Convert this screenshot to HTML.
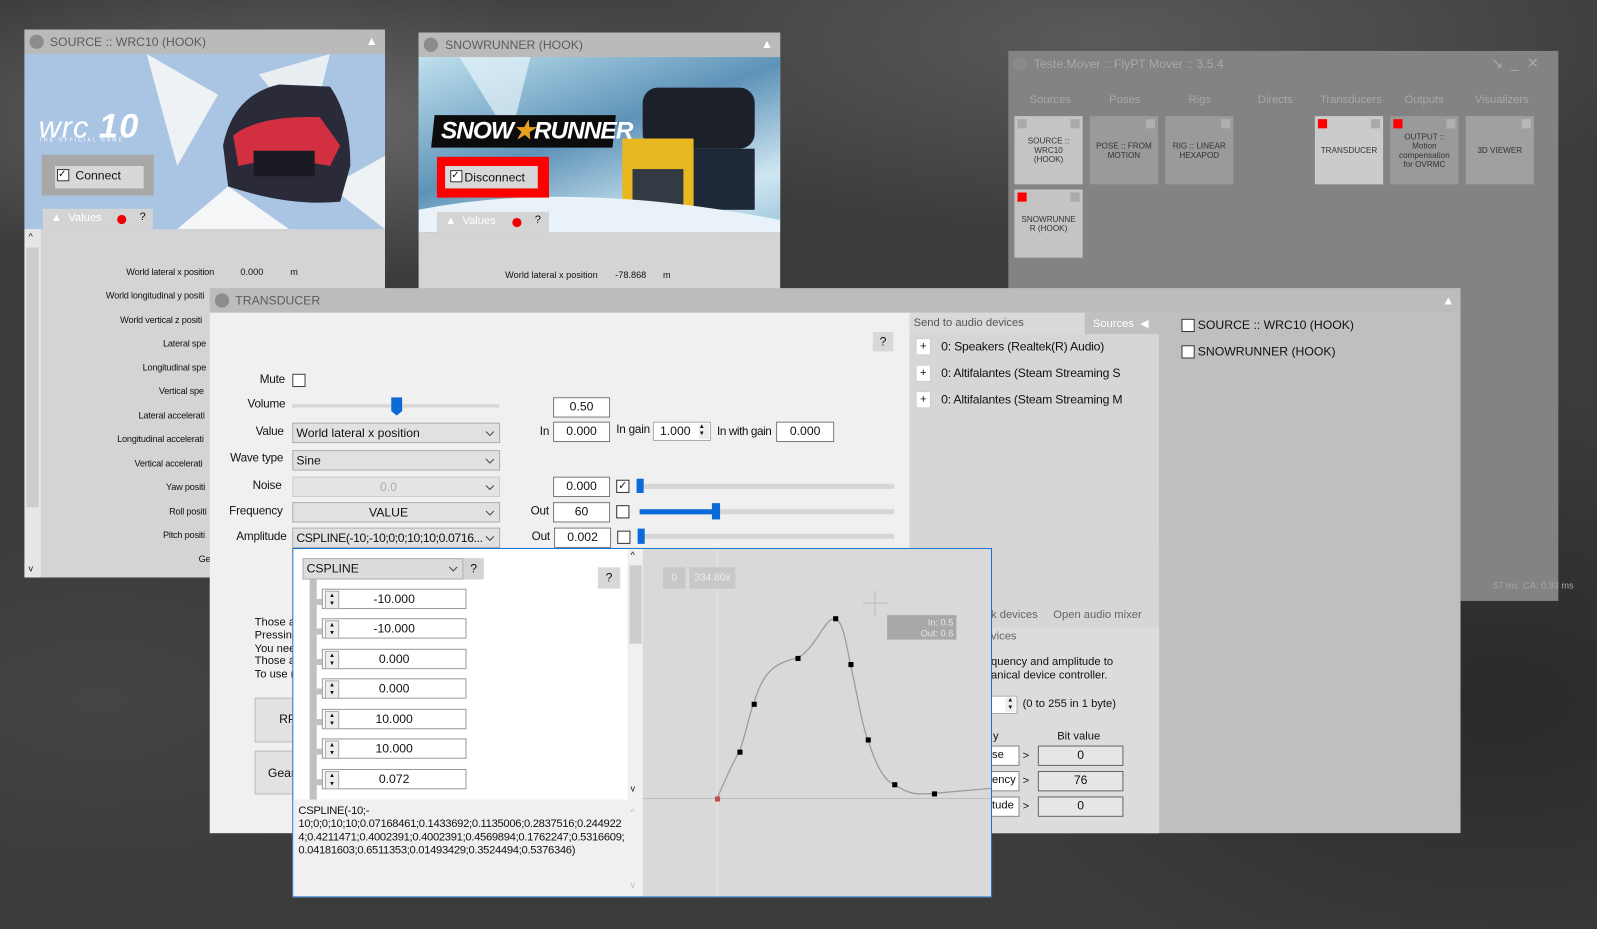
<!DOCTYPE html>
<html><head><meta charset="utf-8"><style>
*{margin:0;padding:0;box-sizing:border-box}
body{width:1597px;height:929px;overflow:hidden;position:relative;font-family:"Liberation Sans",sans-serif;font-size:11px;color:#111;
background:radial-gradient(ellipse 500px 160px at 300px 120px,#6a6a6a,transparent),radial-gradient(ellipse 600px 200px at 1100px 40px,#5a5a5a,transparent),radial-gradient(ellipse 400px 200px at 100px 700px,#444,transparent),radial-gradient(ellipse 500px 300px at 1500px 700px,#2a2a2a,transparent),#3b3b3b}
#w{position:absolute;left:0;top:0;width:1568px;height:912px;transform:scale(1.0185);transform-origin:0 0}
.a{position:absolute}
.t{position:absolute;white-space:nowrap}
.tb{position:absolute;font-size:12px;color:#5c5c5c}
.ic{position:absolute;width:14px;height:14px;border-radius:50%;background:#8c8c8c}
.box{position:absolute;background:#fff;border:1px solid #7a7a7a;text-align:center;font-size:12px;line-height:17px}
.cb{position:absolute;width:13px;height:13px;background:#fff;border:1px solid #333}
.combo{position:absolute;height:20px;background:#e1e1e1;border:1px solid #adadad;font-size:12px;line-height:18px;padding-left:3px;padding-right:18px;overflow:hidden;white-space:nowrap}
.combo:after{content:"";position:absolute;right:6px;top:5px;width:5px;height:5px;border-right:1px solid #444;border-bottom:1px solid #444;transform:rotate(45deg)}
.lbl{position:absolute;font-size:11.5px;text-align:right;white-space:nowrap;letter-spacing:-0.2px}
.card{position:absolute;width:67px;height:67px;font-size:8px;text-align:center;color:#333;display:flex;align-items:center;justify-content:center;line-height:9px}
.sq{position:absolute;width:9px;height:9px;top:3px}
.sp{position:absolute;left:316px;width:142px;height:20px;background:#fff;border:1px solid #999;font-size:12px;line-height:18px;text-align:center}
.sp:before{content:"▲\A▼";white-space:pre;position:absolute;left:2px;top:1px;width:12px;font-size:6px;line-height:8px;background:#eee;border:1px solid #aaa}
.br{position:absolute;left:311px;width:12px;height:6px;background:#c0c0c0}
</style></head><body><div id="w">

<!-- FlyPT Mover window -->
<div class="a" style="left:990px;top:50px;width:540px;height:540px;background:#838383"></div>
<div class="ic" style="left:995px;top:56px;background:#8a8a8a"></div>
<div class="t" style="left:1015px;top:56px;font-size:12px;color:#a9a9a9">Teste.Mover :: FlyPT Mover :: 3.5.4</div>
<div class="t" style="left:1464px;top:54px;font-size:14px;color:#aaa">↘ &nbsp;_ &nbsp;✕</div>
<div class="t" style="left:1011px;top:92px;font-size:11px;color:#a8a8a8">Sources</div>
<div class="t" style="left:1089px;top:92px;font-size:11px;color:#a8a8a8">Poses</div>
<div class="t" style="left:1167px;top:92px;font-size:11px;color:#a8a8a8">Rigs</div>
<div class="t" style="left:1235px;top:92px;font-size:11px;color:#a8a8a8">Directs</div>
<div class="t" style="left:1296px;top:92px;font-size:11px;color:#a8a8a8">Transducers</div>
<div class="t" style="left:1379px;top:92px;font-size:11px;color:#a8a8a8">Outputs</div>
<div class="t" style="left:1448px;top:92px;font-size:11px;color:#a8a8a8">Visualizers</div>
<div class="card" style="left:996px;top:114px;background:#c4c4c4"><div class="sq" style="left:3px;background:#aaa"></div><div class="sq" style="right:3px;background:#aaa"></div>SOURCE ::<br>WRC10<br>(HOOK)</div>
<div class="card" style="left:1070px;top:114px;background:#9a9a9a"><div class="sq" style="right:3px;background:#b0b0b0"></div>POSE :: FROM<br>MOTION</div>
<div class="card" style="left:1144px;top:114px;background:#9a9a9a"><div class="sq" style="right:3px;background:#b0b0b0"></div>RIG :: LINEAR<br>HEXAPOD</div>
<div class="card" style="left:1291px;top:114px;background:#cbcbcb"><div class="sq" style="left:3px;background:#f00"></div><div class="sq" style="right:3px;background:#aaa"></div>TRANSDUCER</div>
<div class="card" style="left:1365px;top:114px;background:#9a9a9a"><div class="sq" style="left:3px;background:#f00"></div><div class="sq" style="right:3px;background:#b0b0b0"></div>OUTPUT ::<br>Motion<br>compensation<br>for OVRMC</div>
<div class="card" style="left:1439px;top:114px;background:#a0a0a0"><div class="sq" style="right:3px;background:#b8b8b8"></div>3D VIEWER</div>
<div class="card" style="left:996px;top:186px;background:#c4c4c4"><div class="sq" style="left:3px;background:#f00"></div><div class="sq" style="right:3px;background:#aaa"></div>SNOWRUNNE<br>R (HOOK)</div>
<div class="t" style="left:1466px;top:570px;font-size:9px;color:#a8a8a8">57 ms &nbsp;CA: 0.93 ms</div>

<!-- WRC window -->
<div class="a" style="left:24px;top:29px;width:354px;height:538px;background:#d4d4d4"></div>
<div class="a" style="left:24px;top:29px;width:354px;height:24px;background:#bababa"></div>
<div class="ic" style="left:29px;top:34px"></div>
<div class="tb" style="left:49px;top:34px">SOURCE :: WRC10 (HOOK)</div>
<div class="t" style="left:359px;top:33px;color:#fff;font-size:12px">▲</div>
<div class="a" style="left:24px;top:53px;width:354px;height:172px;background:#a9c5e3;overflow:hidden">
 <svg width="354" height="172" style="position:absolute;left:0;top:0">
  <polygon points="120,0 190,40 150,110" fill="#eef2f4"/>
  <polygon points="230,20 300,0 280,80" fill="#e8eef2"/>
  <polygon points="200,130 260,172 150,172" fill="#f4f6f8"/>
  <polygon points="300,130 354,100 354,172" fill="#eef2f4"/>
  <path d="M195,90 Q205,40 250,30 L300,32 Q320,60 320,110 L310,145 Q260,150 200,130 Z" fill="#2a2a38"/>
  <path d="M205,80 Q230,60 290,62 L310,90 L300,110 Q250,100 210,110Z" fill="#d23040"/>
  <rect x="225" y="95" width="60" height="25" fill="#1a1a22"/>
 </svg>
 <div class="t" style="left:14px;top:52px;font-size:30px;font-style:italic;color:#fff;letter-spacing:1px">wrc <b style="font-size:34px">10</b></div>
 <div class="t" style="left:14px;top:82px;font-size:5px;color:#fff;letter-spacing:2px">THE OFFICIAL GAME</div>
</div>
<div class="a" style="left:41px;top:152px;width:110px;height:40px;background:#a8a8a8"></div>
<div class="a" style="left:54px;top:163px;width:87px;height:22px;background:#d8d8d8"></div>
<div class="cb" style="left:56px;top:166px;width:12px;height:12px;font-size:10px;line-height:10px">✓</div>
<div class="t" style="left:74px;top:165px;font-size:12px">Connect</div>
<div class="a" style="left:42px;top:205px;width:108px;height:20px;background:#d4d4d4"></div>
<div class="t" style="left:50px;top:208px;color:#fff;font-size:11px">▲ &nbsp;Values</div>
<div class="a" style="left:115px;top:211px;width:9px;height:9px;border-radius:50%;background:#e00"></div>
<div class="t" style="left:137px;top:207px;font-size:11px">?</div>
<div class="a" style="left:24px;top:225px;width:16px;height:342px;background:#e6e6e6"></div>
<div class="a" style="left:26px;top:243px;width:12px;height:255px;background:#cdcdcd"></div>
<div class="t" style="left:28px;top:227px;font-size:9px">^</div>
<div class="t" style="left:28px;top:553px;font-size:9px">v</div>
<div class="lbl" style="left:124px;top:262px;font-size:9px">World lateral x position</div>
<div class="t" style="left:236px;top:262px;font-size:9px">0.000</div>
<div class="t" style="left:285px;top:262px;font-size:9px">m</div>
<div class="lbl" style="left:104px;top:285px;font-size:9px">World longitudinal y positi</div>
<div class="lbl" style="left:118px;top:309px;font-size:9px">World vertical z positi</div>
<div class="lbl" style="left:160px;top:332px;font-size:9px">Lateral spe</div>
<div class="lbl" style="left:140px;top:356px;font-size:9px">Longitudinal spe</div>
<div class="lbl" style="left:156px;top:379px;font-size:9px">Vertical spe</div>
<div class="lbl" style="left:136px;top:403px;font-size:9px">Lateral accelerati</div>
<div class="lbl" style="left:115px;top:426px;font-size:9px">Longitudinal accelerati</div>
<div class="lbl" style="left:132px;top:450px;font-size:9px">Vertical accelerati</div>
<div class="lbl" style="left:163px;top:473px;font-size:9px">Yaw positi</div>
<div class="lbl" style="left:166px;top:497px;font-size:9px">Roll positi</div>
<div class="lbl" style="left:160px;top:520px;font-size:9px">Pitch positi</div>
<div class="lbl" style="left:195px;top:544px;font-size:9px">Ge</div>

<!-- Snowrunner window -->
<div class="a" style="left:411px;top:32px;width:355px;height:260px;background:#d4d4d4"></div>
<div class="a" style="left:411px;top:32px;width:355px;height:24px;background:#bababa"></div>
<div class="ic" style="left:416px;top:37px"></div>
<div class="tb" style="left:437px;top:37px">SNOWRUNNER (HOOK)</div>
<div class="t" style="left:747px;top:36px;color:#fff;font-size:12px">▲</div>
<div class="a" style="left:411px;top:56px;width:355px;height:172px;background:linear-gradient(160deg,#bfe0ee,#5e93b8 45%,#cfe6f2 80%,#9cc4dc);overflow:hidden">
 <svg width="355" height="172" style="position:absolute;left:0;top:0">
  <polygon points="40,0 110,0 90,80" fill="#e6f4fa" opacity=".7"/>
  <rect x="220" y="30" width="110" height="60" rx="15" fill="#1c2028"/>
  <rect x="200" y="80" width="70" height="70" fill="#e9b820"/>
  <rect x="210" y="110" width="50" height="40" fill="#333a44"/>
  <rect x="270" y="90" width="60" height="60" fill="#1e2836"/>
  <path d="M0,150 Q150,120 355,160 L355,172 L0,172Z" fill="#e8f2f8"/>
 </svg>
 <div class="t" style="left:14px;top:57px;width:178px;height:32px;background:#0c0c0c;transform:skewX(-6deg)"></div>
 <div class="t" style="left:22px;top:58px;font-size:24px;font-weight:bold;font-style:italic;color:#fff;letter-spacing:-1px">SNOW<span style="color:#e8a020">★</span>RUNNER</div>
</div>
<div class="a" style="left:429px;top:154px;width:110px;height:40px;background:#f00"></div>
<div class="a" style="left:437px;top:163px;width:91px;height:22px;background:#d8d8d8"></div>
<div class="cb" style="left:442px;top:167px;width:12px;height:12px;font-size:10px;line-height:10px">✓</div>
<div class="t" style="left:456px;top:167px;font-size:12px">Disconnect</div>
<div class="a" style="left:429px;top:208px;width:110px;height:20px;background:#d4d4d4"></div>
<div class="t" style="left:437px;top:211px;color:#fff;font-size:11px">▲ &nbsp;Values</div>
<div class="a" style="left:503px;top:214px;width:9px;height:9px;border-radius:50%;background:#e00"></div>
<div class="t" style="left:525px;top:210px;font-size:11px">?</div>
<div class="t" style="left:496px;top:265px;font-size:9px">World lateral x position</div>
<div class="t" style="left:604px;top:265px;font-size:9px">-78.868</div>
<div class="t" style="left:651px;top:265px;font-size:9px">m</div>

<!-- Transducer window -->
<div class="a" style="left:206px;top:283px;width:1228px;height:535px;background:#bfbfbf"></div>
<div class="a" style="left:206px;top:283px;width:1228px;height:24px;background:#bcbcbc"></div>
<div class="ic" style="left:211px;top:288px"></div>
<div class="tb" style="left:231px;top:288px">TRANSDUCER</div>
<div class="t" style="left:1416px;top:288px;color:#fff;font-size:12px">▲</div>
<div class="a" style="left:206px;top:307px;width:687px;height:511px;background:#f0f0f0"></div>
<div class="a" style="left:893px;top:307px;width:245px;height:511px;background:#d6d6d6"></div>
<div class="a" style="left:893px;top:307px;width:172px;height:21px;background:#dadada"></div>
<div class="t" style="left:897px;top:311px;font-size:11px;color:#555">Send to audio devices</div>
<div class="a" style="left:1065px;top:307px;width:73px;height:21px;background:#c0c0c0"></div>
<div class="t" style="left:1073px;top:311px;font-size:11px;color:#fff">Sources &nbsp;◀</div>
<div class="a" style="left:899px;top:332px;width:15px;height:17px;background:#fff;border:1px solid #ccc;font-size:11px;text-align:center;line-height:15px">+</div>
<div class="t" style="left:924px;top:333px;font-size:12px;letter-spacing:-0.2px">0: Speakers (Realtek(R) Audio)</div>
<div class="a" style="left:899px;top:358px;width:15px;height:17px;background:#fff;border:1px solid #ccc;font-size:11px;text-align:center;line-height:15px">+</div>
<div class="t" style="left:924px;top:359px;font-size:12px;letter-spacing:-0.2px">0: Altifalantes (Steam Streaming S</div>
<div class="a" style="left:899px;top:384px;width:15px;height:17px;background:#fff;border:1px solid #ccc;font-size:11px;text-align:center;line-height:15px">+</div>
<div class="t" style="left:924px;top:385px;font-size:12px;letter-spacing:-0.2px">0: Altifalantes (Steam Streaming M</div>
<div class="cb" style="left:1160px;top:313px"></div>
<div class="t" style="left:1176px;top:312px;font-size:12px">SOURCE :: WRC10 (HOOK)</div>
<div class="cb" style="left:1160px;top:339px"></div>
<div class="t" style="left:1176px;top:338px;font-size:12px">SNOWRUNNER (HOOK)</div>

<div class="a" style="left:857px;top:326px;width:20px;height:19px;background:#d8d8d8;text-align:center;font-size:12px;line-height:19px">?</div>
<div class="lbl" style="left:255px;top:367px">Mute</div>
<div class="cb" style="left:287px;top:367px;border-color:#444"></div>
<div class="lbl" style="left:243px;top:391px">Volume</div>
<div class="a" style="left:287px;top:397px;width:203px;height:3px;background:#e0e0e0;border:1px solid #d0d0d0"></div>
<div class="a" style="left:384px;top:390px;width:11px;height:18px;background:#0a6ad8;clip-path:polygon(0 0,100% 0,100% 75%,50% 100%,0 75%)"></div>
<div class="box" style="left:543px;top:390px;width:56px;height:20px">0.50</div>
<div class="lbl" style="left:251px;top:418px">Value</div>
<div class="combo" style="left:287px;top:415px;width:204px">World lateral x position</div>
<div class="lbl" style="left:530px;top:418px">In</div>
<div class="box" style="left:543px;top:414px;width:56px;height:20px">0.000</div>
<div class="lbl" style="left:605px;top:416px">In gain</div>
<div class="box" style="left:641px;top:414px;width:57px;height:19px;text-align:left;padding-left:6px;border-color:#aaa">1.000<span style="position:absolute;right:1px;top:1px;width:10px;height:15px;font-size:6px;line-height:7px;background:#eee">▲<br>▼</span></div>
<div class="lbl" style="left:704px;top:418px;letter-spacing:-0.4px">In with gain</div>
<div class="box" style="left:762px;top:414px;width:57px;height:20px">0.000</div>
<div class="lbl" style="left:226px;top:444px">Wave type</div>
<div class="combo" style="left:287px;top:442px;width:204px">Sine</div>
<div class="lbl" style="left:248px;top:471px">Noise</div>
<div class="combo" style="left:287px;top:468px;width:204px;color:#aaa;text-align:center;background:#e4e4e4;border-color:#ccc">0.0</div>
<div class="box" style="left:543px;top:468px;width:56px;height:20px">0.000</div>
<div class="cb" style="left:605px;top:471px;font-size:11px;line-height:10px;text-align:center">✓</div>
<div class="a" style="left:625px;top:475px;width:253px;height:5px;background:#d6d6d6"></div>
<div class="a" style="left:625px;top:470px;width:7px;height:14px;background:#0a6ad8"></div>
<div class="lbl" style="left:225px;top:496px">Frequency</div>
<div class="combo" style="left:287px;top:493px;width:204px;text-align:center">VALUE</div>
<div class="lbl" style="left:521px;top:496px">Out</div>
<div class="box" style="left:543px;top:493px;width:56px;height:20px">60</div>
<div class="cb" style="left:605px;top:496px"></div>
<div class="a" style="left:628px;top:500px;width:250px;height:5px;background:#d6d6d6"></div>
<div class="a" style="left:628px;top:500px;width:75px;height:5px;background:#0a6ad8"></div>
<div class="a" style="left:699px;top:494px;width:8px;height:16px;background:#0a6ad8"></div>
<div class="lbl" style="left:232px;top:521px">Amplitude</div>
<div class="combo" style="left:287px;top:518px;width:204px;letter-spacing:-0.4px">CSPLINE(-10;-10;0;0;10;10;0.0716...</div>
<div class="lbl" style="left:522px;top:521px">Out</div>
<div class="box" style="left:544px;top:518px;width:56px;height:20px">0.002</div>
<div class="cb" style="left:606px;top:521px"></div>
<div class="a" style="left:628px;top:524px;width:250px;height:5px;background:#d6d6d6"></div>
<div class="a" style="left:626px;top:519px;width:7px;height:15px;background:#0a6ad8"></div>

<div class="t" style="left:250px;top:605px;font-size:11px;line-height:12.8px">Those a<br>Pressing<br>You nee<br>Those a<br>To use r</div>
<div class="a" style="left:250px;top:685px;width:40px;height:44px;background:#e2e2e2;border:1px solid #bbb"></div>
<div class="t" style="left:274px;top:699px;font-size:12px">RP</div>
<div class="a" style="left:250px;top:737px;width:40px;height:43px;background:#e2e2e2;border:1px solid #bbb"></div>
<div class="t" style="left:263px;top:752px;font-size:12px">Gear</div>

<!-- right pane under popup -->
<div class="a" style="left:973px;top:538px;width:165px;height:58px;background:#d6d6d6"></div>
<div class="a" style="left:973px;top:596px;width:165px;height:20px;background:#d6d6d6"></div>
<div class="a" style="left:973px;top:616px;width:165px;height:202px;background:#dcdcdc"></div>
<div class="t" style="left:973px;top:598px;font-size:11px;color:#666">k devices &nbsp;&nbsp;&nbsp;&nbsp;Open audio mixer</div>
<div class="t" style="left:973px;top:619px;font-size:11px;color:#666">vices</div>
<div class="t" style="left:973px;top:644px;font-size:11px;line-height:13px">quency and amplitude to<br>anical device controller.</div>
<div class="a" style="left:973px;top:683px;width:26px;height:18px;background:#fff;border:1px solid #aaa"><span style="position:absolute;right:1px;top:1px;width:10px;height:14px;font-size:6px;line-height:7px;background:#eee;text-align:center">▲<br>▼</span></div>
<div class="t" style="left:1004px;top:685px;font-size:11px">(0 to 255 in 1 byte)</div>
<div class="t" style="left:975px;top:717px;font-size:11px">y</div>
<div class="t" style="left:1038px;top:717px;font-size:11px">Bit value</div>
<div class="box" style="left:973px;top:732px;width:28px;height:20px;text-align:left;font-size:11px;border-color:#888">se</div>
<div class="t" style="left:1004px;top:736px;font-size:11px">&gt;</div>
<div class="box" style="left:1019px;top:732px;width:84px;height:20px;background:#e6e6e6;border-color:#666">0</div>
<div class="box" style="left:973px;top:757px;width:28px;height:20px;text-align:left;font-size:11px;border-color:#888;overflow:hidden">ency</div>
<div class="t" style="left:1004px;top:761px;font-size:11px">&gt;</div>
<div class="box" style="left:1019px;top:757px;width:84px;height:20px;background:#e6e6e6;border-color:#666">76</div>
<div class="box" style="left:973px;top:782px;width:28px;height:20px;text-align:left;font-size:11px;border-color:#888;overflow:hidden">tude</div>
<div class="t" style="left:1004px;top:786px;font-size:11px">&gt;</div>
<div class="box" style="left:1019px;top:782px;width:84px;height:20px;background:#e6e6e6;border-color:#666">0</div>

<!-- CSPLINE popup -->
<div class="a" style="left:287px;top:538px;width:687px;height:343px;background:#fff;border:1px solid #1a6fd0"></div>
<div class="a" style="left:288px;top:785px;width:328px;height:95px;background:#f0f0f0"></div>
<div class="a" style="left:616px;top:539px;width:15px;height:246px;background:#f0f0f0"></div>
<div class="a" style="left:618px;top:555px;width:12px;height:77px;background:#cdcdcd"></div>
<div class="t" style="left:619px;top:540px;font-size:9px">^</div>
<div class="t" style="left:619px;top:769px;font-size:9px">v</div>
<div class="a" style="left:616px;top:785px;width:15px;height:95px;background:#f0f0f0"></div>
<div class="t" style="left:619px;top:792px;font-size:9px;color:#bbb">^</div>
<div class="t" style="left:619px;top:864px;font-size:9px;color:#bbb">v</div>
<div class="combo" style="left:297px;top:548px;width:158px;height:21px;background:#dcdcdc">CSPLINE</div>
<div class="a" style="left:455px;top:548px;width:20px;height:21px;background:#d4d4d4;text-align:center;font-size:12px;line-height:20px">?</div>
<div class="a" style="left:587px;top:557px;width:22px;height:21px;background:#d8d8d8;text-align:center;font-size:12px;line-height:21px">?</div>
<div class="a" style="left:304px;top:569px;width:7px;height:216px;background:#c0c0c0"></div>
<div class="br" style="top:588px"></div><div class="sp" style="top:578px">-10.000</div>
<div class="br" style="top:617px"></div><div class="sp" style="top:607px">-10.000</div>
<div class="br" style="top:647px"></div><div class="sp" style="top:637px">0.000</div>
<div class="br" style="top:676px"></div><div class="sp" style="top:666px">0.000</div>
<div class="br" style="top:706px"></div><div class="sp" style="top:696px">10.000</div>
<div class="br" style="top:735px"></div><div class="sp" style="top:725px">10.000</div>
<div class="br" style="top:765px"></div><div class="sp" style="top:755px">0.072</div>
<div class="a" style="left:293px;top:790px;width:322px;font-size:11px;line-height:13px;word-break:break-all;letter-spacing:-0.3px">CSPLINE(-10;-<br>10;0;0;10;10;0.07168461;0.1433692;0.1135006;0.2837516;0.2449224;0.4211471;0.4002391;0.4002391;0.4569894;0.1762247;0.5316609;0.04181603;0.6511353;0.01493429;0.3524494;0.5376346)</div>
<div class="a" style="left:631px;top:539px;width:342px;height:341px;background:#d9d9d9">
 <svg width="342" height="341" style="position:absolute;left:0;top:0">
  <line x1="73" y1="0" x2="73" y2="341" stroke="#e6e6e6"/>
  <line x1="0" y1="245" x2="342" y2="245" stroke="#bdbdbd"/>
  <line x1="228" y1="41" x2="228" y2="66" stroke="#bbb"/>
  <line x1="216" y1="53" x2="241" y2="53" stroke="#bbb"/>
  <path d="M73,245 C82,225 88,210 95,199 C102,180 105,160 109,152 C118,120 130,112 152,107 C170,98 180,65 189,69 C197,70 200,95 204,113 C212,150 216,175 221,187 C230,215 238,228 247,231 C262,242 272,241 286,240 L342,235" fill="none" stroke="#999" stroke-width="1.2"/>
  <g fill="#000"><rect x="93" y="197" width="5" height="5"/><rect x="107" y="150" width="5" height="5"/><rect x="150" y="105" width="5" height="5"/><rect x="187" y="66" width="5" height="5"/><rect x="202" y="111" width="5" height="5"/><rect x="219" y="185" width="5" height="5"/><rect x="245" y="229" width="5" height="5"/><rect x="284" y="238" width="5" height="5"/></g>
  <rect x="71" y="243" width="5" height="5" fill="#c05050"/>
 </svg>
 <div class="a" style="left:20px;top:18px;width:22px;height:21px;background:#c8c8c8;color:#eee;font-size:10px;text-align:center;line-height:21px">0</div>
 <div class="a" style="left:46px;top:18px;width:45px;height:21px;background:#c8c8c8;color:#eee;font-size:10px;text-align:center;line-height:21px">334.80x</div>
 <div class="a" style="left:240px;top:65px;width:68px;height:24px;background:#a8a8a8;color:#e8e8e8;font-size:9px;text-align:right;line-height:11px;padding:2px 3px">In: 0.5<br>Out: 0.6</div>
</div>
</div></body></html>
